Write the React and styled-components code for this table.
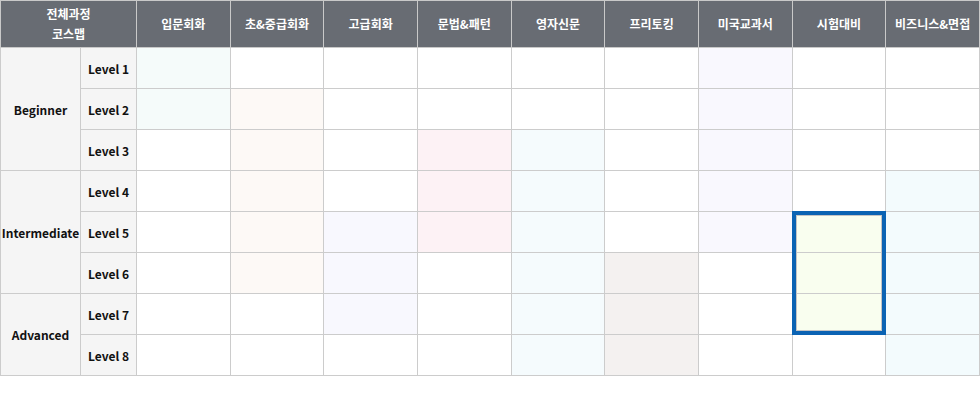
import React from 'react';
import styled, { createGlobalStyle } from 'styled-components';

const GlobalStyle = createGlobalStyle`
  body {
    margin: 0;
    background: #fff;
    font-family: 'Noto Sans CJK KR', 'Noto Sans', sans-serif;
  }
`;

const Wrapper = styled.div`
  position: relative;
  width: 980px;
`;

const Table = styled.table`
  width: 980px;
  border-collapse: collapse;
  table-layout: fixed;
  font-size: 12px;
  font-weight: 700;
  color: #111;
`;

const HeadCell = styled.th`
  height: 46px;
  padding: 0;
  background: #686c73;
  color: #fff;
  border: 1px solid #c9c9c9;
  font-weight: 700;
  line-height: 20px;
  text-align: center;
`;

const LabelCell = styled.td`
  padding: 0;
  background: #f5f5f5;
  border: 1px solid #cccccc;
  text-align: center;
`;

const Cell = styled.td`
  height: 40px;
  padding: 0;
  border: 1px solid #cccccc;
  background: ${(p) => p.$tint || '#fff'};
`;

const Highlight = styled.div`
  position: absolute;
  left: 792px;
  top: 211px;
  width: 94px;
  height: 124px;
  box-sizing: border-box;
  border: 4px solid #0b63b3;
  box-shadow: inset 0 0 0 1px #c4c4c4;
  pointer-events: none;
`;

const courses = [
  '입문회화',
  '초&중급회화',
  '고급회화',
  '문법&패턴',
  '영자신문',
  '프리토킹',
  '미국교과서',
  '시험대비',
  '비즈니스&면접',
];

// tint and level range (inclusive) per course column
const ranges = [
  { from: 1, to: 2, tint: '#f5fbfa' },
  { from: 2, to: 6, tint: '#fdf9f6' },
  { from: 5, to: 7, tint: '#f8f8fe' },
  { from: 3, to: 5, tint: '#fdf2f5' },
  { from: 3, to: 8, tint: '#f5fbfd' },
  { from: 6, to: 8, tint: '#f4f1f0' },
  { from: 1, to: 5, tint: '#f9f8fe' },
  { from: 5, to: 7, tint: '#f9feef' },
  { from: 4, to: 8, tint: '#f3fbfd' },
];

const groups = {
  1: { name: 'Beginner', span: 3 },
  4: { name: 'Intermediate', span: 3 },
  7: { name: 'Advanced', span: 2 },
};

const levels = [1, 2, 3, 4, 5, 6, 7, 8];

const App = () => {
  return (
    <Wrapper>
      <GlobalStyle />
      <Table>
        <colgroup>
          <col style={{ width: 80 }} />
          <col style={{ width: 56 }} />
          {courses.map((c) => (
            <col key={c} />
          ))}
        </colgroup>
        <thead>
          <tr>
            <HeadCell colSpan={2}>
              전체과정
              <br />
              코스맵
            </HeadCell>
            {courses.map((c) => (
              <HeadCell key={c}>{c}</HeadCell>
            ))}
          </tr>
        </thead>
        <tbody>
          {levels.map((lv) => (
            <tr key={lv}>
              {groups[lv] && (
                <LabelCell rowSpan={groups[lv].span}>{groups[lv].name}</LabelCell>
              )}
              <LabelCell>Level {lv}</LabelCell>
              {ranges.map((r, i) => (
                <Cell
                  key={i}
                  $tint={lv >= r.from && lv <= r.to ? r.tint : null}
                />
              ))}
            </tr>
          ))}
        </tbody>
      </Table>
      <Highlight />
    </Wrapper>
  );
};

export default App;
